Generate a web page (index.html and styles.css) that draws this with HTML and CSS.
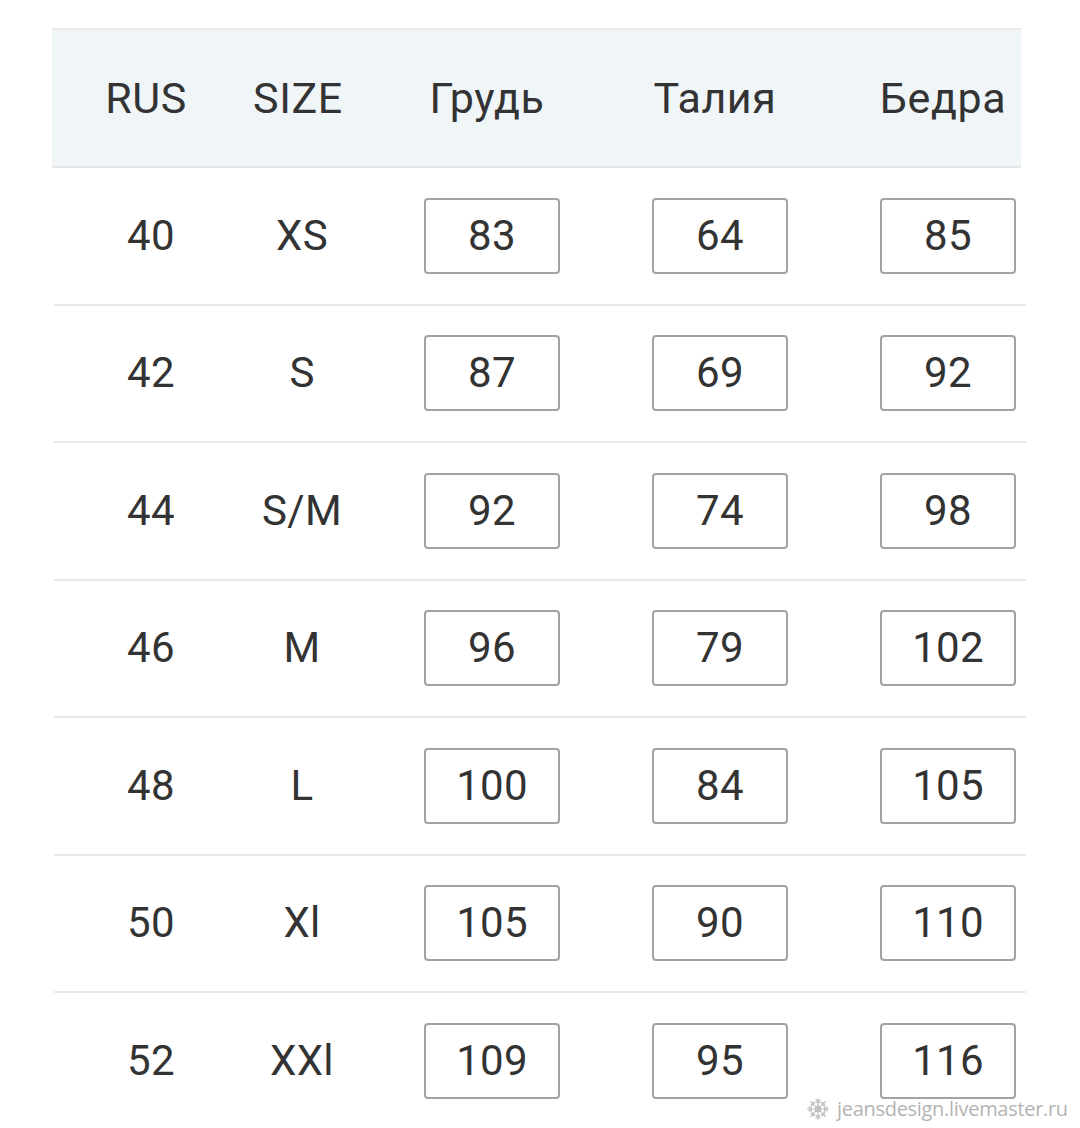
FILE: index.html
```html
<!DOCTYPE html>
<html lang="ru">
<head>
<meta charset="utf-8">
<title>Размеры</title>
<link rel="stylesheet" href="styles.css">
</head>
<body>
<div class="page">
  <div class="table">
    <div class="head">
      <div class="c c1">RUS</div>
      <div class="c c2">SIZE</div>
      <div class="c cb"><span class="hb">Грудь</span></div>
      <div class="c cb"><span class="hb">Талия</span></div>
      <div class="c cb"><span class="hb">Бедра</span></div>
    </div>
    <div class="row">
      <div class="c c1">40</div><div class="c c2">XS</div>
      <div class="c cb"><span class="box">83</span></div>
      <div class="c cb"><span class="box">64</span></div>
      <div class="c cb"><span class="box">85</span></div>
    </div>
    <div class="row">
      <div class="c c1">42</div><div class="c c2">S</div>
      <div class="c cb"><span class="box">87</span></div>
      <div class="c cb"><span class="box">69</span></div>
      <div class="c cb"><span class="box">92</span></div>
    </div>
    <div class="row">
      <div class="c c1">44</div><div class="c c2">S/M</div>
      <div class="c cb"><span class="box">92</span></div>
      <div class="c cb"><span class="box">74</span></div>
      <div class="c cb"><span class="box">98</span></div>
    </div>
    <div class="row">
      <div class="c c1">46</div><div class="c c2">M</div>
      <div class="c cb"><span class="box">96</span></div>
      <div class="c cb"><span class="box">79</span></div>
      <div class="c cb"><span class="box">102</span></div>
    </div>
    <div class="row">
      <div class="c c1">48</div><div class="c c2">L</div>
      <div class="c cb"><span class="box">100</span></div>
      <div class="c cb"><span class="box">84</span></div>
      <div class="c cb"><span class="box">105</span></div>
    </div>
    <div class="row">
      <div class="c c1">50</div><div class="c c2">Xl</div>
      <div class="c cb"><span class="box">105</span></div>
      <div class="c cb"><span class="box">90</span></div>
      <div class="c cb"><span class="box">110</span></div>
    </div>
    <div class="row last">
      <div class="c c1">52</div><div class="c c2">XXl</div>
      <div class="c cb"><span class="box">109</span></div>
      <div class="c cb"><span class="box">95</span></div>
      <div class="c cb"><span class="box">116</span></div>
    </div>
  </div>
  <div class="mark">
    <svg class="mark-icon" width="24" height="24" viewBox="0 0 24 24" aria-hidden="true">
      <g fill="none" stroke="#bdbdbd" stroke-width="1.2" stroke-linecap="round">
        <circle cx="12" cy="12" r="2.6"/>
        <circle cx="12" cy="12" r="7" stroke-dasharray="1.6 1.2"/>
        <path d="M12 1.5v21M1.5 12h21M4.6 4.6l14.8 14.8M19.4 4.6L4.6 19.4"/>
        <path d="M10 3l2 2 2-2M10 21l2-2 2 2M3 10l2 2-2 2M21 10l-2 2 2 2"/>
        <path d="M5 7.5l2-0.5 0.5-2M19 7.5l-2-0.5-0.5-2M5 16.5l2 0.5 0.5 2M19 16.5l-2 0.5-0.5 2"/>
      </g>
    </svg>
    <span class="mark-text">jeansdesign.livemaster.ru</span>
  </div>
</div>
</body>
</html>
```

FILE: styles.css
```css
html, body {
  margin: 0;
  padding: 0;
  background: #ffffff;
}

.page {
  position: relative;
  width: 1080px;
  height: 1128px;
  overflow: hidden;
  font-family: Roboto, "Liberation Sans", sans-serif;
  color: #333333;
}

.table {
  margin-left: 52px;
  padding-top: 28px;
  width: 974px;
}

.head,
.row {
  display: grid;
  grid-template-columns: 194px 112px 228px 228px 212px;
  align-items: center;
}

.head {
  height: 136px;
  background: #f0f5f8;
  border-top: 2px solid #ebebeb;
  border-bottom: 2px solid #e6e6e6;
  margin-right: 5px;
  font-size: 43px;
  letter-spacing: 0.6px;
}

.row {
  height: 135.5px;
  border-bottom: 2px solid #e8e8e8;
  margin-left: 2px;
  font-size: 42px;
  letter-spacing: 0.3px;
}

.row.last {
  border-bottom: none;
}

.c {
  text-align: center;
  line-height: 1;
}

.head .c1 { padding-right: 6px; }
.head .c2 { padding-right: 8px; }
.row .c2 { padding-right: 4px; }

.cb {
  text-align: left;
  padding-left: 64px;
}

.head .cb {
  padding-left: 62px;
}

.hb {
  display: inline-block;
  width: 134px;
  text-align: center;
}

.head .cb:nth-child(4) .hb,
.head .cb:nth-child(5) .hb {
  width: 134px;
}

.box {
  display: inline-flex;
  align-items: center;
  justify-content: center;
  box-sizing: border-box;
  width: 136px;
  height: 76px;
  border: 2px solid #a3a3a3;
  border-radius: 4px;
  background: #ffffff;
}

.mark {
  position: absolute;
  left: 806px;
  top: 1095px;
  display: flex;
  align-items: center;
  gap: 7px;
}

.mark-text {
  font-family: "Open Sans", "DejaVu Sans", sans-serif;
  font-size: 20px;
  color: #b4b4b4;
  letter-spacing: -0.3px;
  text-shadow: 0 0 2px #ffffff;
}
```
